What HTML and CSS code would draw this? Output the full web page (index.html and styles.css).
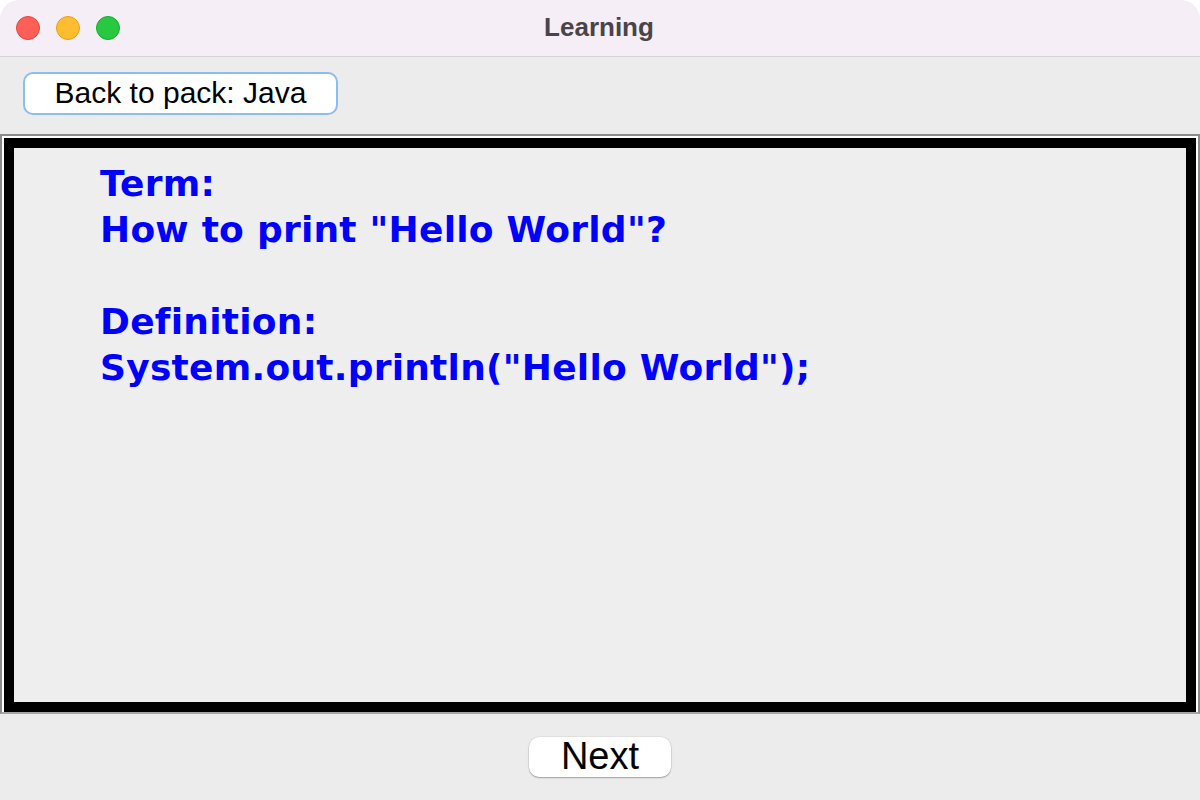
FILE: index.html
```html
<!DOCTYPE html>
<html>
<head>
<meta charset="utf-8">
<title>Learning</title>
<link rel="stylesheet" href="styles.css">
</head>
<body>
<div class="window">
  <div class="titlebar">
    <div class="lights">
      <span class="light red"></span>
      <span class="light yellow"></span>
      <span class="light green"></span>
    </div>
    <div class="title">Learning</div>
  </div>
  <div class="toolbar">
    <button class="back-btn">Back to pack: Java</button>
  </div>
  <div class="frame">
    <div class="frame-inner">
      <div class="card">
        <div class="card-text">
          <div>Term:</div>
          <div>How to print "Hello World"?</div>
          <div class="blank">&nbsp;</div>
          <div>Definition:</div>
          <div>System.out.println("Hello World");</div>
        </div>
      </div>
    </div>
  </div>
  <div class="footer">
    <button class="next-btn">Next</button>
  </div>
</div>
</body>
</html>
```

FILE: styles.css
```css
* { box-sizing: border-box; }
html, body {
  margin: 0;
  padding: 0;
  background: #ffffff;
}
body {
  width: 1200px;
  height: 800px;
  overflow: hidden;
  font-family: "Liberation Sans", Arial, sans-serif;
}
.window {
  width: 1200px;
  height: 800px;
  display: flex;
  flex-direction: column;
  background: #ececec;
  border-radius: 20px 20px 0 0;
  overflow: hidden;
}
.titlebar {
  height: 57px;
  flex: none;
  background: #f5eef6;
  border-bottom: 1px solid #d6d2d7;
  display: flex;
  align-items: center;
  justify-content: center;
  position: relative;
}
.lights {
  position: absolute;
  left: 16px;
  top: 16px;
  display: flex;
  gap: 16px;
}
.light {
  width: 24px;
  height: 24px;
  border-radius: 50%;
  display: block;
}
.light.red { background: #ff5f57; border: 1px solid #e2463f; }
.light.yellow { background: #febc2e; border: 1px solid #e1a116; }
.light.green { background: #28c840; border: 1px solid #14ae2a; }
.title {
  font-family: "Liberation Sans", Arial, sans-serif;
  font-weight: bold;
  font-size: 26px;
  color: #48444a;
  margin-left: -2px;
  margin-top: -2px;
}
.toolbar {
  flex: none;
  height: 77px;
  padding: 15px 23px 0 23px;
}
.back-btn {
  width: 315px;
  height: 43px;
  background: #ffffff;
  border: 2px solid #8dbcf0;
  border-radius: 10px;
  font-family: "Liberation Sans", Arial, sans-serif;
  font-size: 30px;
  color: #000000;
  padding: 0 0 2px 0;
  margin: 0;
  line-height: 36px;
}
.frame {
  flex: 1;
  border: 2px solid #8c8c8c;
  border-bottom-color: #a6a6a6;
  display: flex;
}
.frame-inner {
  flex: 1;
  border: 2px solid #ffffff;
  border-bottom: none;
  display: flex;
}
.card {
  flex: 1;
  border: 10px solid #000000;
  background: #eeeeee;
  padding: 13px 0 0 86px;
}
.card-text {
  font-family: "DejaVu Sans", Verdana, sans-serif;
  font-weight: bold;
  font-size: 36px;
  letter-spacing: 0.25px;
  line-height: 46px;
  color: #0000ff;
}
.footer {
  flex: none;
  height: 86px;
  display: flex;
  align-items: center;
  justify-content: center;
}
.next-btn {
  width: 142px;
  height: 40px;
  background: #ffffff;
  border: none;
  border-radius: 10px;
  box-shadow: 0 1px 1.5px rgba(0,0,0,0.3), 0 0 0 0.5px rgba(0,0,0,0.08);
  font-family: "Liberation Sans", Arial, sans-serif;
  font-size: 38px;
  color: #000000;
  padding: 0 0 2px 0;
  margin: 0;
  line-height: 38px;
}
```
